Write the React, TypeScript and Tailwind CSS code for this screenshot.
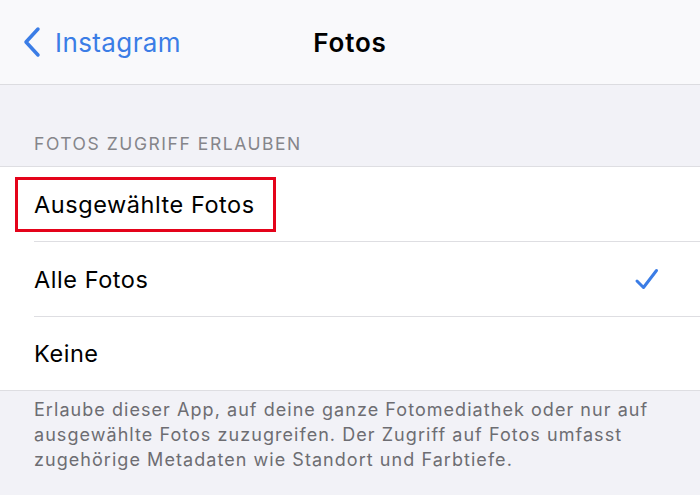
import React from 'react';

const font = { fontFamily: 'Inter, "Noto Sans", sans-serif' };

function Row({ label, checked, last, h }: { label: string; checked?: boolean; last?: boolean; h: string }) {
    return (
        <div className={`flex ${h} items-stretch bg-white pl-[34px]`}>
            <div className={`flex flex-1 items-center justify-between pr-[40px] ${last ? '' : 'border-b border-[#dedee2]'}`}>
                <span className="text-[23.5px] tracking-[0.55px] text-black">{label}</span>
                {checked && (
                    <svg width="26" height="24" viewBox="0 0 26 24" fill="none">
                        <path d="M3 14 L9.5 20.5 L22.5 3.5" stroke="#3b7de6" strokeWidth="3" strokeLinecap="round" strokeLinejoin="round" />
                    </svg>
                )}
            </div>
        </div>
    );
}

export default function App() {
    return (
        <div className="h-[495px] w-[700px] overflow-hidden bg-[#f2f2f7]" style={font}>
            <div className="relative flex h-[85px] items-center border-b border-[#dcdce0] bg-[#f9f9fb]">
                <div className="flex items-center gap-[13px] pl-[22px] text-[#3b7de6]">
                    <svg width="20" height="32" viewBox="0 0 20 32" fill="none">
                        <path d="M16 3 L4 16 L16 29" stroke="#3b7de6" strokeWidth="3.5" strokeLinecap="round" strokeLinejoin="round" />
                    </svg>
                    <span className="text-[26px] tracking-[0.4px]">Instagram</span>
                </div>
                <div className="pointer-events-none absolute inset-x-0 text-center text-[26px] font-semibold tracking-[0.8px] text-black">Fotos</div>
            </div>

            <div className="px-[34px] pt-[46px] pb-[9px] text-[17.5px] uppercase tracking-[1.55px] text-[#85858a]">Fotos Zugriff erlauben</div>

            <div className="relative border-y border-[#dedee2]">
                <Row label="Ausgewählte Fotos" h="h-[75px]" />
                <Row label="Alle Fotos" checked h="h-[75px]" />
                <Row label="Keine" last h="h-[73px]" />
                <div className="absolute left-[15px] top-[10px] h-[55px] w-[261px] border-[3px] border-[#e4031a]" />
            </div>

            <p className="px-[34px] pt-[6px] text-[18px] leading-[25px] tracking-[1.05px] text-[#6d6d72]">
                Erlaube dieser App, auf deine ganze Fotomediathek oder nur auf ausgewählte Fotos zuzugreifen. Der Zugriff auf Fotos umfasst
                zugehörige Metadaten wie Standort und Farbtiefe.
            </p>
        </div>
    );
}
